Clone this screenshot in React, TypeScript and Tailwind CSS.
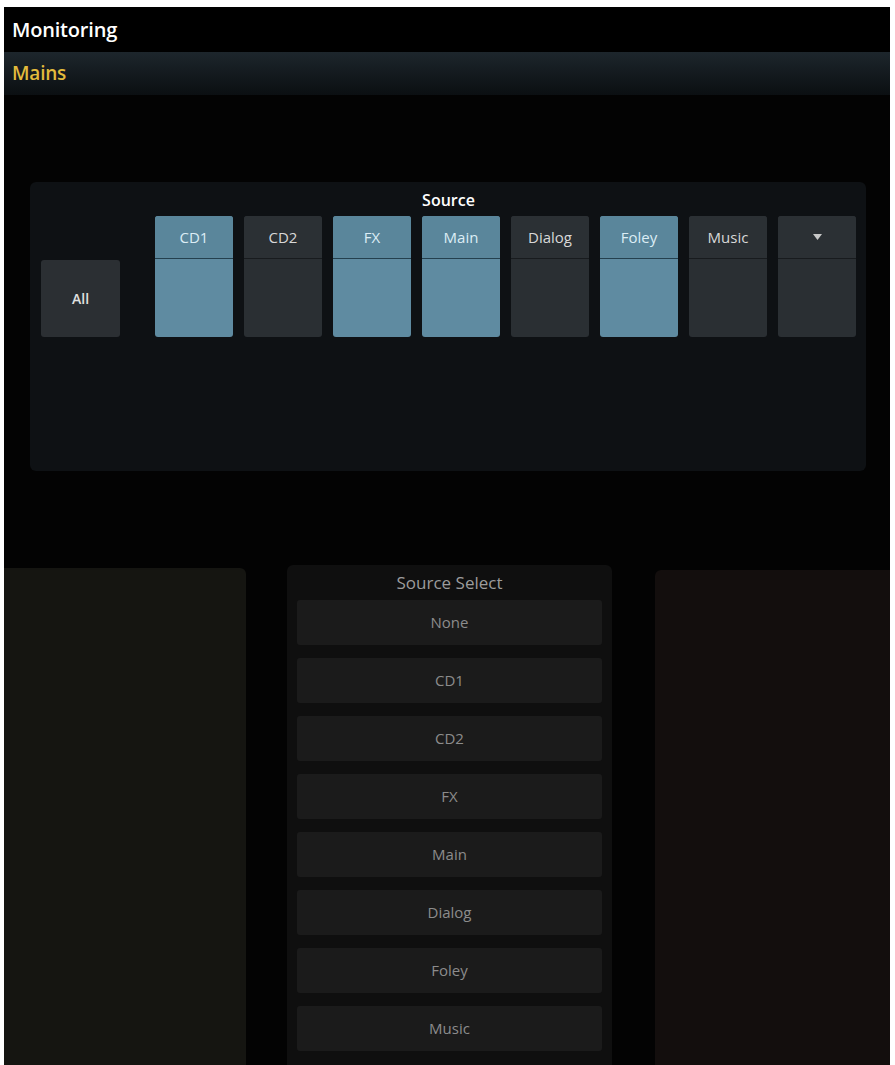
import React from "react";

type Source = { name: string; on: boolean; arrow?: boolean };

const sources: Source[] = [
  { name: "CD1", on: true },
  { name: "CD2", on: false },
  { name: "FX", on: true },
  { name: "Main", on: true },
  { name: "Dialog", on: false },
  { name: "Foley", on: true },
  { name: "Music", on: false },
  { name: "", on: false, arrow: true },
];

const selectItems = ["None", "CD1", "CD2", "FX", "Main", "Dialog", "Foley", "Music"];

function SourceButton({ s }: { s: Source }) {
  return (
    <div
      className={
        "w-[78px] h-[121px] shrink-0 rounded-[3px] flex flex-col overflow-hidden " +
        (s.on ? "bg-[#5f8ba1]" : "bg-[#2a2f33]")
      }
    >
      <div
        className={
          "h-[43px] flex items-center justify-center text-[15px] font-medium border-b " +
          (s.on
            ? "bg-[#5a869b] text-[#dcedf5] border-[#24404e]"
            : "bg-[#2b3034] text-[#d8d8d8] border-[#181b1e]")
        }
      >
        {s.arrow ? (
          <svg width="9" height="6" viewBox="0 0 9 6">
            <polygon points="0,0 9,0 4.5,6" fill="#c8c8c8" />
          </svg>
        ) : (
          s.name
        )}
      </div>
      <div className="flex-1" />
    </div>
  );
}

export default function App() {
  return (
    <div
      className="bg-white pt-[7px] pl-[4px] pr-[5px] h-[1065px]"
      style={{ fontFamily: '"Open Sans", "Noto Sans", sans-serif' }}
    >
      <div className="bg-[#030303] h-[1058px] flex flex-col overflow-hidden">
        <div className="h-[45px] shrink-0 bg-black flex items-center px-[8px]">
          <span className="text-white text-[20px] font-semibold tracking-[-0.2px]">Monitoring</span>
        </div>
        <div className="h-[43px] shrink-0 bg-gradient-to-b from-[#1d262c] to-[#0b0f12] flex items-center px-[8px]">
          <span className="text-[#e3bb3c] text-[19px] font-semibold tracking-[-0.2px]">Mains</span>
        </div>

        <div className="mt-[87px] ml-[26px] mr-[24px] h-[289px] shrink-0 rounded-[6px] bg-[#0e1114] pt-[8px] pl-[11px] pr-[10px]">
          <div className="text-center text-white text-[16px] font-semibold leading-[20px]">Source</div>
          <div className="mt-[6px] flex items-end">
            <div className="w-[79px] h-[77px] shrink-0 rounded-[3px] bg-[#2b2f33] flex items-center justify-center text-[#e0e0e0] text-[14px] font-semibold">
              All
            </div>
            <div className="ml-[35px] flex gap-[11px]">
              {sources.map((s, i) => (
                <SourceButton key={i} s={s} />
              ))}
            </div>
          </div>
        </div>

        <div className="mt-[94px] flex items-stretch flex-1 min-h-0">
          <div className="w-[242px] mt-[3px] rounded-tr-[6px] bg-[#151511]" />
          <div className="ml-[41px] w-[325px] rounded-t-[6px] bg-[#0f0f0f] px-[10px] pt-[6px]">
            <div className="text-center text-[#9c9c9c] text-[17px] leading-[24px]">Source Select</div>
            <div className="mt-[5px] flex flex-col gap-[13px]">
              {selectItems.map((it) => (
                <div
                  key={it}
                  className="h-[45px] rounded-[3px] bg-[#1b1b1b] flex items-center justify-center text-[#8c8c8c] text-[15px]"
                >
                  {it}
                </div>
              ))}
            </div>
          </div>
          <div className="ml-[43px] mt-[5px] w-[235px] rounded-tl-[6px] bg-[#130e0d]" />
        </div>
      </div>
    </div>
  );
}
